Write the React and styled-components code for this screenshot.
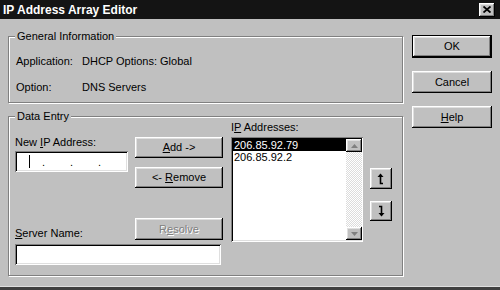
import React from 'react';
import styled, { createGlobalStyle } from 'styled-components';

const GlobalStyle = createGlobalStyle`
  html, body {
    margin: 0;
    padding: 0;
    background: #c0c0c0;
  }
  body {
    font-family: "Liberation Sans", Arial, sans-serif;
    font-size: 11px;
    color: #000;
  }
`;

const raised = `
  box-shadow: inset -1px -1px 0 #000, inset 1px 1px 0 #fff,
    inset -2px -2px 0 #808080, inset 2px 2px 0 #dfdfdf;
`;

const sunken = `
  box-shadow: inset 1px 1px 0 #808080, inset -1px -1px 0 #fff,
    inset 2px 2px 0 #000, inset -2px -2px 0 #dfdfdf;
`;

const Window = styled.div`
  width: 500px;
  height: 290px;
  box-sizing: border-box;
  background: #c0c0c0;
  display: flex;
  flex-direction: column;
  box-shadow: inset 0 -3px 0 #404040, inset 0 -4px 0 #dfdfdf;
  overflow: hidden;
`;

const TitleBar = styled.div`
  height: 19px;
  flex: none;
  background: #141414;
  color: #fff;
  font-weight: bold;
  font-size: 12px;
  display: flex;
  align-items: center;
  justify-content: space-between;
  padding: 0 5px 0 3px;
`;

const CloseBox = styled.div`
  width: 16px;
  height: 14px;
  background: #c0c0c0;
  display: flex;
  align-items: center;
  justify-content: center;
  ${raised}
`;

const Body = styled.div`
  display: flex;
  padding-left: 8px;
`;

const LeftCol = styled.div`
  width: 395px;
  display: flex;
  flex-direction: column;
`;

const Group = styled.div`
  position: relative;
  box-sizing: border-box;
  border: 1px solid #808080;
  box-shadow: 1px 1px 0 #fff, inset 1px 1px 0 #fff;
  margin-top: ${({ $top }) => $top}px;
  height: ${({ $h }) => $h}px;
`;

const Legend = styled.span`
  position: absolute;
  top: -7px;
  left: 6px;
  padding: 0 2px;
  background: #c0c0c0;
  line-height: 13px;
`;

const InfoBody = styled.div`
  padding: 18px 0 0 7px;
`;

const InfoRow = styled.div`
  display: flex;
  line-height: 13px;
  margin-bottom: 13px;
`;

const InfoLabel = styled.span`
  width: 66px;
`;

const DataBody = styled.div`
  display: flex;
  padding: 4px 0 0 6px;
`;

const Column = styled.div`
  display: flex;
  flex-direction: column;
  width: ${({ $w }) => $w}px;
  margin-left: ${({ $ml = 0 }) => $ml}px;
`;

const Row = styled.div`
  display: flex;
  align-items: ${({ $align = 'flex-start' }) => $align};
  gap: ${({ $gap = 0 }) => $gap}px;
  margin-top: ${({ $mt = 0 }) => $mt}px;
`;

const Label = styled.label`
  display: block;
  line-height: 13px;
  margin-top: ${({ $mt = 0 }) => $mt}px;
  width: ${({ $w }) => ($w ? `${$w}px` : 'auto')};
  flex: none;
`;

const TextBox = styled.div`
  box-sizing: border-box;
  background: #fff;
  width: ${({ $w }) => $w}px;
  height: 21px;
  margin-top: ${({ $mt = 0 }) => $mt}px;
  display: flex;
  align-items: center;
  padding-left: 14px;
  ${sunken}
`;

const Caret = styled.span`
  width: 1px;
  height: 13px;
  background: #000;
`;

const Dot = styled.span`
  width: 3px;
  margin-left: ${({ $first }) => ($first ? 12 : 25)}px;
  font-size: 11px;
  line-height: 11px;
  position: relative;
  top: 1px;
`;

const Button = styled.div`
  box-sizing: border-box;
  width: ${({ $w }) => $w}px;
  height: ${({ $h }) => $h}px;
  margin-top: ${({ $mt = 0 }) => $mt}px;
  display: flex;
  align-items: center;
  justify-content: center;
  line-height: 13px;
  flex: none;
  color: ${({ $disabled }) => ($disabled ? '#808080' : '#000')};
  text-shadow: ${({ $disabled }) => ($disabled ? '1px 1px 0 #fff' : 'none')};
  ${({ $default }) =>
    $default
      ? `
    border: 1px solid #000;
    box-shadow: inset -1px -1px 0 #000, inset 1px 1px 0 #fff,
      inset -2px -2px 0 #808080, inset 2px 2px 0 #dfdfdf;
  `
      : raised}
`;

const Key = styled.span`
  text-decoration: underline;
  text-underline-offset: 1px;
`;

const ListBox = styled.div`
  box-sizing: border-box;
  margin-top: 3px;
  width: 132px;
  height: 105px;
  background: #fff;
  padding: 2px 1px 2px 2px;
  display: flex;
  ${sunken}
`;

const Items = styled.div`
  flex: 1;
`;

const Item = styled.div`
  line-height: 12px;
  height: 12px;
  padding-left: 1px;
  font-size: 11px;
  background: ${({ $selected }) => ($selected ? '#000' : 'transparent')};
  color: ${({ $selected }) => ($selected ? '#fff' : '#000')};
`;

const ScrollBar = styled.div`
  width: 16px;
  display: flex;
  flex-direction: column;
  justify-content: space-between;
  background: repeating-conic-gradient(#fff 0 25%, #dcdcdc 0 50%) 0 0 / 2px 2px;
`;

const ScrollButton = styled.div`
  height: 13px;
  background: #c0c0c0;
  display: flex;
  align-items: center;
  justify-content: center;
  ${raised}
`;

const RightCol = styled.div`
  display: flex;
  flex-direction: column;
  margin-left: 9px;
`;

function Arrow({ down }) {
  return (
    <svg width="7" height="4" viewBox="0 0 7 4">
      <path d={down ? 'M0 0H7L3.5 4Z' : 'M0 4H7L3.5 0Z'} fill="#808080" />
    </svg>
  );
}

function MoveIcon({ down }) {
  return down ? (
    <svg width="8" height="12" viewBox="0 0 8 12">
      <path d="M2 1.5H4.5V9" stroke="#000" strokeWidth="1.6" fill="none" />
      <path d="M1.5 8H7.5L4.5 11.5Z" fill="#000" />
    </svg>
  ) : (
    <svg width="8" height="12" viewBox="0 0 8 12">
      <path d="M6 10.5H3.5V3" stroke="#000" strokeWidth="1.6" fill="none" />
      <path d="M0.5 4H6.5L3.5 0.5Z" fill="#000" />
    </svg>
  );
}

export default function App() {
  return (
    <>
      <GlobalStyle />
      <Window>
        <TitleBar>
          <span>IP Address Array Editor</span>
          <CloseBox>
            <svg width="8" height="7" viewBox="0 0 8 7">
              <path d="M0.5 0.5L7.5 6.5M7.5 0.5L0.5 6.5" stroke="#000" strokeWidth="1.8" />
            </svg>
          </CloseBox>
        </TitleBar>
        <Body>
          <LeftCol>
            <Group $top={17} $h={67}>
              <Legend>General Information</Legend>
              <InfoBody>
                <InfoRow>
                  <InfoLabel>Application:</InfoLabel>
                  <span>DHCP Options: Global</span>
                </InfoRow>
                <InfoRow>
                  <InfoLabel>Option:</InfoLabel>
                  <span>DNS Servers</span>
                </InfoRow>
              </InfoBody>
            </Group>

            <Group $top={13} $h={160}>
              <Legend>Data Entry</Legend>
              <DataBody>
                <Column $w={208}>
                  <Row $gap={7}>
                    <Column $w={113}>
                      <Label $mt={15}>New <Key>I</Key>P Address:</Label>
                      <TextBox $w={113} $mt={2}>
                        <Caret />
                        <Dot $first>.</Dot>
                        <Dot>.</Dot>
                        <Dot>.</Dot>
                      </TextBox>
                    </Column>
                    <Column $w={88}>
                      <Button $w={88} $h={21} $mt={16}>
                        <span><Key>A</Key>dd -&gt;</span>
                      </Button>
                      <Button $w={88} $h={21} $mt={9}>
                        <span>&lt;- <Key>R</Key>emove</span>
                      </Button>
                    </Column>
                  </Row>
                  <Row $align="flex-end" $mt={30}>
                    <Label $w={120}><Key>S</Key>erver Name:</Label>
                    <Button $w={88} $h={22} $disabled>
                      <span>R<Key>e</Key>solve</span>
                    </Button>
                  </Row>
                  <TextBox $w={206} $mt={4} />
                </Column>

                <Column $w={132} $ml={8}>
                  <Label>I<Key>P</Key> Addresses:</Label>
                  <ListBox>
                    <Items>
                      <Item $selected>206.85.92.79</Item>
                      <Item>206.85.92.2</Item>
                    </Items>
                    <ScrollBar>
                      <ScrollButton><Arrow /></ScrollButton>
                      <ScrollButton><Arrow down /></ScrollButton>
                    </ScrollBar>
                  </ListBox>
                </Column>

                <Column $w={22} $ml={7}>
                  <Button $w={22} $h={21} $mt={47}><MoveIcon /></Button>
                  <Button $w={22} $h={20} $mt={12}><MoveIcon down /></Button>
                </Column>
              </DataBody>
            </Group>
          </LeftCol>

          <RightCol>
            <Button $w={80} $h={23} $mt={16} $default>OK</Button>
            <Button $w={80} $h={22} $mt={13}>Cancel</Button>
            <Button $w={80} $h={22} $mt={13}><span><Key>H</Key>elp</span></Button>
          </RightCol>
        </Body>
      </Window>
    </>
  );
}
